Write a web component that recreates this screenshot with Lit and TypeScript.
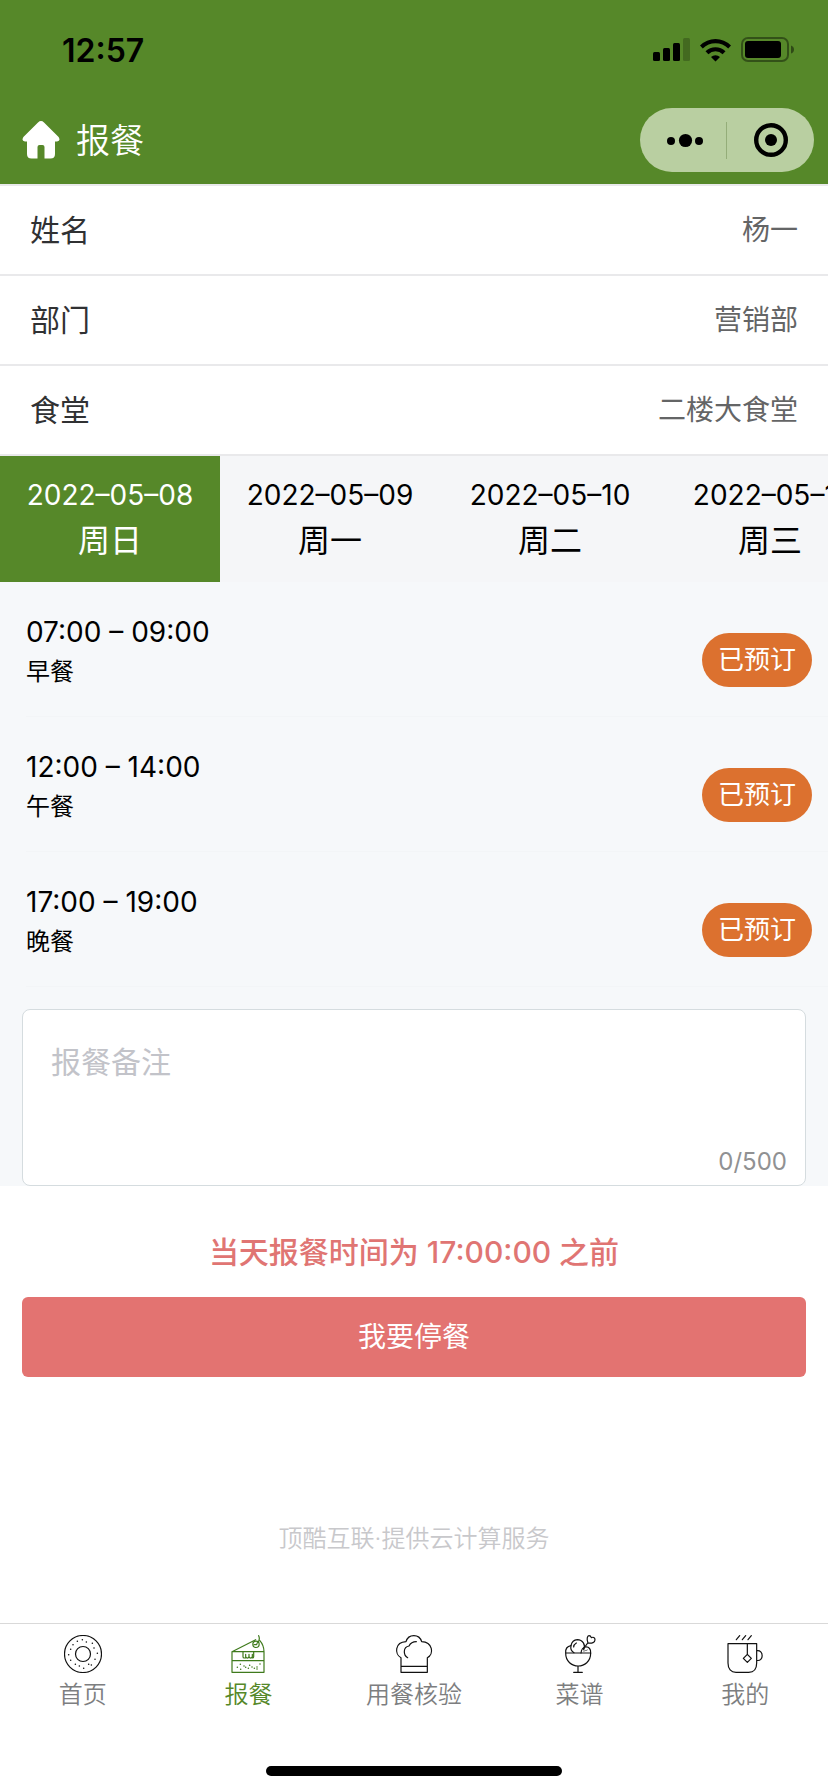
import { LitElement, html, css, svg } from "lit";
import { customElement, state } from "lit/decorators.js";
import { classMap } from "lit/directives/class-map.js";

const donut = svg`
  <circle cx="57" cy="57" r="55.5" /><circle cx="57" cy="57" r="22.5" />
  <path class="dots" d="M55 14h.1M67 21h.1M40 19h.1M85 25h.1M27 29h.1M90 39h.1M20 43h.1M100 55h.1M14 59h.1M93 73h.1M20 76h.1M82 90h.1M34 88h.1M74 88h.1M46 93h.1M59 100h.1" />`;

const cake = svg`
  <path d="M9 50v62h96V50zM9 77h96M9 50L80 14M92 16c8 9 13 21 13 34" />
  <circle cx="81" cy="28" r="9.5" />
  <path d="M88 21c3-5 4-12 1-19M75 29l8 0 2-6M42 51v14q0 4 4 4h4V58v6c0 7 10 7 10 0v-6 6c0 7 10 7 10 0v-6 11q4 0 4-4V51" />
  <path class="dots" d="M34 88h.1M45 93h.1M25 97h.1M35 103h.1M50 97h.1M58 100h.1M62 91h.1M69 96h.1M76 100h.1M84 96h.1M84 102h.1M93 87h.1" />`;

const hat = svg`
  <path d="M18 112V68C-2 58-1 22 33 20 40-4 73-4 80 20c33 1 38 37 17 48v44zM18 94h79" />
  <path d="M38 68C24 60 24 36 42 33c4-8 11-13 22-13" />`;

const sundae = svg`
  <path d="M14 54h75c0 52-75 52-75 0zM51 93v19M38 112h26M14 54c-1-11 5-20 16-22" />
  <path d="M39 53C23 44 28 16 49 14c16 0 26 16 19 30M60 54c1-10 6-17 14-18 10-1 16 7 15 18" />
  <path d="M69 39l12-16M81 24C76 12 79 2 84 2c4 0 6 3 7 6 5-3 11 0 11 6 0 8-9 12-21 10zM38 36c0-5 3-9 8-12" />
  <path class="thin" d="M68 48c2-3 3 2 5-1 2-2 3 1 6-2" />`;

const cup = svg`
  <path d="M6 26h86v58c0 18-9 28-24 28H30C15 112 6 102 6 84zM92 47c22-4 22 34 0 29M64 26v32M64 58L76 70 64 82 52 70z" />
  <path d="M31 14L41 2M49 14L59 2M66 14L76 2" />`;

interface Meal { time: string; name: string }

@customElement("app-root")
export class AppRoot extends LitElement {
  @state() private day = 0;
  @state() private note = "";

  private cells = [
    ["姓名", "杨一"],
    ["部门", "营销部"],
    ["食堂", "二楼大食堂"],
  ];
  private days = [
    ["2022–05–08", "周日"],
    ["2022–05–09", "周一"],
    ["2022–05–10", "周二"],
    ["2022–05–11", "周三"],
  ];
  private meals: Meal[] = [
    { time: "07:00 – 09:00", name: "早餐" },
    { time: "12:00 – 14:00", name: "午餐" },
    { time: "17:00 – 19:00", name: "晚餐" },
  ];
  private tabs = [
    { label: "首页", icon: donut },
    { label: "报餐", icon: cake },
    { label: "用餐核验", icon: hat },
    { label: "菜谱", icon: sundae },
    { label: "我的", icon: cup },
  ];

  static styles = css`
    :host {
      display: flex;
      flex-direction: column;
      min-height: 100vh;
      background: #fff;
      color: #000;
      font-family: Inter, "Noto Sans CJK SC", sans-serif;
      font-size: 28px;
    }
    * { box-sizing: border-box; }
    button, textarea { font: inherit; color: inherit; border: 0; margin: 0; padding: 0; background: none; }
    svg { display: block; }
    .top { background: #568829; }
    .status {
      display: flex; align-items: center; justify-content: space-between;
      height: 96px; padding: 4px 34px 0 62px;
      font-size: 32px; font-weight: 600;
    }
    .nav {
      display: flex; align-items: center; justify-content: space-between;
      height: 88px; padding: 0 14px 0 22px;
    }
    .title { display: flex; align-items: center; gap: 16px; color: #fff; }
    h1 { margin: 0; padding-top: 2px; font-size: 34px; font-weight: 350; line-height: 48px; }
    .capsule { display: flex; height: 64px; border-radius: 32px; background: #b9cfa1; }
    .capsule button { display: grid; place-items: center; width: 87px; }
    .rule { width: 1px; height: 37px; align-self: center; background: #94ad79; margin-left: -1px; }

    .cells { margin: 0; border-top: 2px solid #e9e9eb; }
    .cell {
      display: flex; align-items: center; justify-content: space-between;
      height: 90px; padding: 0 30px 4px; border-bottom: 2px solid #e9e9eb;
    }
    dt { font-size: 30px; color: #303133; }
    dd { margin: 0; color: #646566; }

    .days { display: flex; overflow: hidden; background: #f5f6f8; }
    .day { flex: none; width: 220px; padding: 16px 0 18px; line-height: 46px; font-size: 28px; }
    .day span { display: block; }
    .day .week { font-size: 32px; }
    .day.on { background: #568829; color: #fff; }

    .order { background: #f6f8fa; }
    .meals { list-style: none; margin: 0; padding: 0; }
    .meals li { padding-left: 26px; }
    .meal {
      display: flex; align-items: flex-end; justify-content: space-between;
      height: 135px; padding: 0 16px 24px 0; border-bottom: 1px solid #f3f5f7;
    }
    .meal p { margin: 0; line-height: 40px; }
    .meal .name { font-size: 24px; }
    .badge {
      height: 54px; margin-bottom: 5px; padding: 0 16px; border-radius: 27px;
      background: #dc712f; color: #fff; font-size: 26px; line-height: 54px;
    }
    .note {
      display: flex; flex-direction: column; margin: 22px 22px 0;
      border: 1px solid #d5dcdf; border-radius: 8px; background: #fff;
    }
    .note textarea {
      height: 132px; padding: 31px 28px 0; resize: none; outline: 0;
      font-size: 30px; line-height: 42px;
    }
    .note textarea::placeholder { color: #c2c3c9; opacity: 1; }
    .count { padding: 0 18px 3px; line-height: 40px; text-align: right; font-size: 24px; color: #909193; }

    .tip { margin: 43px 22px 22px; text-align: center; font-size: 30px; line-height: 46px; font-weight: 500; color: #e07573; }
    .stop { display: block; height: 80px; margin: 0 22px; padding-bottom: 4px; border-radius: 6px; background: #e37371; color: #fff; font-size: 28px; }
    .credit { margin: 144px 0 60px; text-align: center; font-size: 24px; line-height: 36px; font-weight: 350; color: #c8c8cb; }

    .tabbar { display: grid; grid-template-columns: repeat(5, 1fr); margin-top: auto; padding-top: 11px; border-top: 1px solid #d9d9d9; }
    .tab { display: flex; flex-direction: column; align-items: center; gap: 6px; color: #7d7e80; text-decoration: none; font-size: 24px; line-height: 32px; font-weight: 350; }
    .tab svg { fill: none; stroke: #111; stroke-width: 3.6; stroke-linejoin: round; stroke-linecap: round; }
    .tab .dots { stroke-width: 4.6; }
    .tab .thin { stroke-width: 2; }
    .tab.on { color: #568829; }
    .tab.on svg { stroke: #3f7a1c; }
    .homebar { width: 296px; height: 10px; margin: 55px auto 16px; border-radius: 5px; background: #000; }
  `;

  render() {
    return html`
      <header class="top">
        <div class="status">
          <span>12:57</span>
          <svg width="142" height="26" viewBox="0 0 142 26" aria-hidden="true">
            <rect x="1" y="15" width="7" height="9" rx="1.5" />
            <rect x="11" y="11" width="7" height="13" rx="1.5" />
            <rect x="21" y="6" width="7" height="18" rx="1.5" />
            <rect x="31" y="1" width="7" height="23" rx="1.5" opacity=".22" />
            <path d="M48 8.5a22 22 0 0 1 31 0l-2.800 3a18 18 0 0 0-25.400 0zM53.500 14.200a14.500 14.500 0 0 1 20 0l-2.900 3a10.300 10.300 0 0 0-14.200 0zM59 20a6.500 6.500 0 0 1 9 0l-4.500 4.500z" />
            <rect x="90" y="1" width="46" height="23" rx="6" fill="none" stroke="#000" stroke-opacity=".4" stroke-width="2" />
            <rect x="93" y="4" width="36" height="17" rx="3" />
            <path d="M139 8.500q3 1 3 4t-3 4z" opacity=".45" />
          </svg>
        </div>
        <div class="nav">
          <div class="title">
            <svg width="38" height="38" viewBox="0 0 38 38" aria-hidden="true">
              <path fill="#fff" d="M16 1.400q3-2.600 6 0L36.600 16q2.400 4-1.600 4.500h-2V33q0 4.500-4.500 4.500H22.500V26q0-2-2-2h-3q-2 0-2 2v11.500H9.500Q5 37.500 5 33V20.500H3Q-1 20 1.400 16z" />
            </svg>
            <h1>报餐</h1>
          </div>
          <div class="capsule">
            <button type="button" aria-label="•••">
              <svg width="38" height="16" viewBox="-1 0 38 16"><circle cx="5" cy="9" r="4" /><circle cx="19.500" cy="8.500" r="6.600" /><circle cx="33" cy="9" r="4" /></svg>
            </button>
            <span class="rule"></span>
            <button type="button" aria-label="◉">
              <svg width="34" height="34" viewBox="0 0 34 34"><circle cx="17" cy="17" r="14.800" fill="none" stroke="#000" stroke-width="4.400" /><circle cx="17" cy="17" r="6" /></svg>
            </button>
          </div>
        </div>
      </header>

      <dl class="cells">
        ${this.cells.map(([k, v]) => html`<div class="cell"><dt>${k}</dt><dd>${v}</dd></div>`)}
      </dl>

      <div class="days">
        ${this.days.map(([date, week], i) => html`
          <button type="button" class=${classMap({ day: true, on: i === this.day })} @click=${() => (this.day = i)}>
            <span>${date}</span><span class="week">${week}</span>
          </button>`)}
      </div>

      <section class="order">
        <ul class="meals">
          ${this.meals.map((m) => html`
            <li><div class="meal">
              <div><p>${m.time}</p><p class="name">${m.name}</p></div>
              <button type="button" class="badge">已预订</button>
            </div></li>`)}
        </ul>
        <div class="note">
          <textarea aria-label="报餐备注" placeholder="报餐备注" maxlength="500" .value=${this.note}
            @input=${(e: Event) => (this.note = (e.target as HTMLTextAreaElement).value)}></textarea>
          <div class="count">${this.note.length}/500</div>
        </div>
      </section>

      <p class="tip">当天报餐时间为 17:00:00 之前</p>
      <button type="button" class="stop">我要停餐</button>
      <p class="credit">顶酷互联·提供云计算服务</p>

      <nav class="tabbar">
        ${this.tabs.map((t, i) => html`
          <a href="#" class=${classMap({ tab: true, on: i === 1 })}>
            <svg width="38" height="38" viewBox="0 0 114 114" aria-hidden="true">${t.icon}</svg>
            <span>${t.label}</span>
          </a>`)}
      </nav>
      <div class="homebar"></div>
    `;
  }
}
